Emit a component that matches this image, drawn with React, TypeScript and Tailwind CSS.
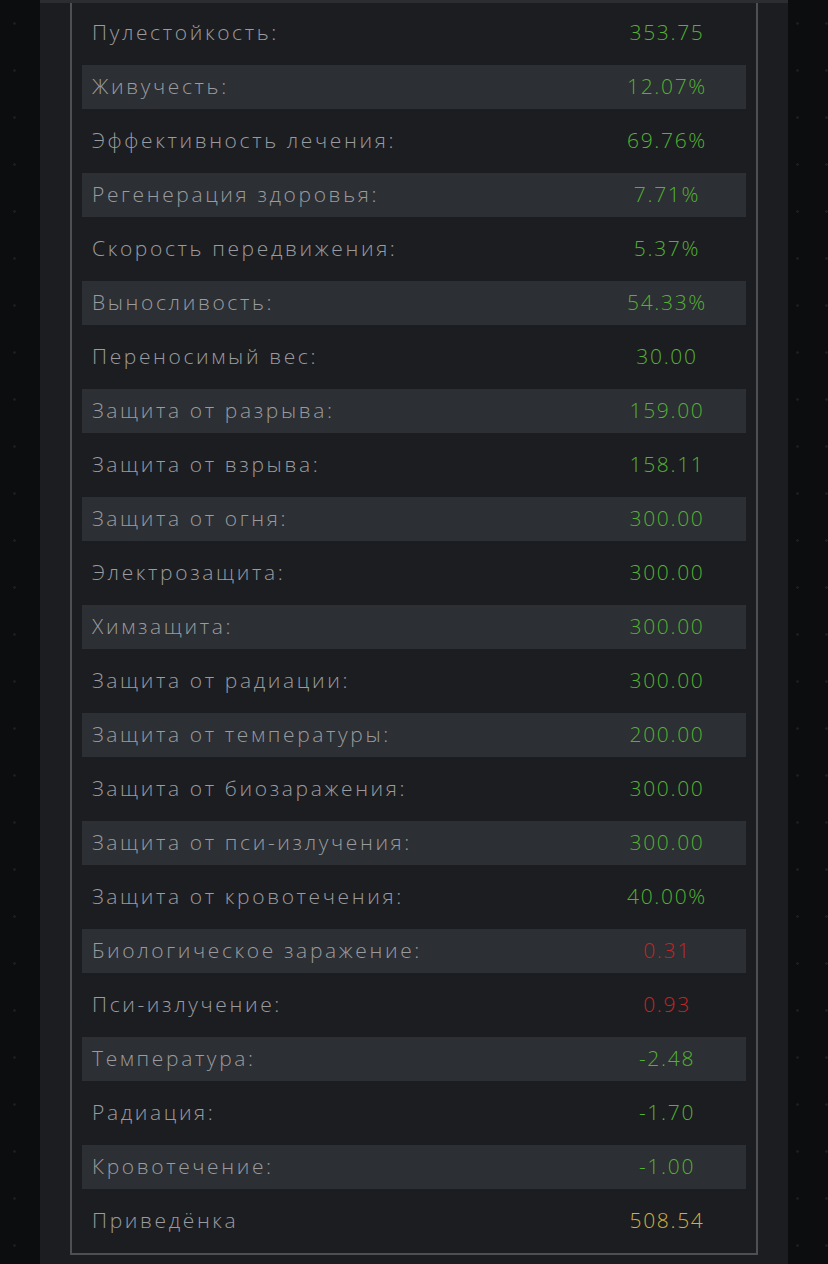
import React from "react";

type Stat = {
    label: string;
    value: string;
    tone: "good" | "bad" | "total";
};

const stats: Stat[] = [
    { label: "Пулестойкость:", value: "353.75", tone: "good" },
    { label: "Живучесть:", value: "12.07%", tone: "good" },
    { label: "Эффективность лечения:", value: "69.76%", tone: "good" },
    { label: "Регенерация здоровья:", value: "7.71%", tone: "good" },
    { label: "Скорость передвижения:", value: "5.37%", tone: "good" },
    { label: "Выносливость:", value: "54.33%", tone: "good" },
    { label: "Переносимый вес:", value: "30.00", tone: "good" },
    { label: "Защита от разрыва:", value: "159.00", tone: "good" },
    { label: "Защита от взрыва:", value: "158.11", tone: "good" },
    { label: "Защита от огня:", value: "300.00", tone: "good" },
    { label: "Электрозащита:", value: "300.00", tone: "good" },
    { label: "Химзащита:", value: "300.00", tone: "good" },
    { label: "Защита от радиации:", value: "300.00", tone: "good" },
    { label: "Защита от температуры:", value: "200.00", tone: "good" },
    { label: "Защита от биозаражения:", value: "300.00", tone: "good" },
    { label: "Защита от пси-излучения:", value: "300.00", tone: "good" },
    { label: "Защита от кровотечения:", value: "40.00%", tone: "good" },
    { label: "Биологическое заражение:", value: "0.31", tone: "bad" },
    { label: "Пси-излучение:", value: "0.93", tone: "bad" },
    { label: "Температура:", value: "-2.48", tone: "good" },
    { label: "Радиация:", value: "-1.70", tone: "good" },
    { label: "Кровотечение:", value: "-1.00", tone: "good" },
    { label: "Приведёнка", value: "508.54", tone: "total" },
];

const toneClass = {
    good: "text-[#52b232]",
    bad: "text-[#c42525]",
    total: "text-[#d2b040]",
};

export default function App() {
    return (
        <div className="min-h-screen bg-[#0c0d0f] bg-[radial-gradient(circle,rgba(255,255,255,0.07)_1px,transparent_1.5px)] bg-[length:29px_47px] flex justify-center font-['Open_Sans','Lato',sans-serif]">
            <div className="w-[748px] bg-[#1c1d21] border-t-[3px] border-[#2c2d31] px-[30px] pb-[9px]">
                <div className="border-x-2 border-b-2 border-[#4e4f53] px-[10px] pt-[8px] pb-[10px] flex flex-col gap-[10px]">
                    {stats.map((s, i) => (
                        <div key={s.label} className={`h-[44px] flex items-center text-[21px] font-light ${i % 2 === 1 ? "bg-[#2c2f33]" : ""}`}>
                            <span className="flex-1 pl-[10px] text-[#9a9b9f] whitespace-nowrap tracking-[0.125em]">{s.label}</span>
                            <span className={`w-[160px] text-center pl-[2px] tracking-[0.08em] ${toneClass[s.tone]}`}>{s.value}</span>
                        </div>
                    ))}
                </div>
            </div>
        </div>
    );
}
